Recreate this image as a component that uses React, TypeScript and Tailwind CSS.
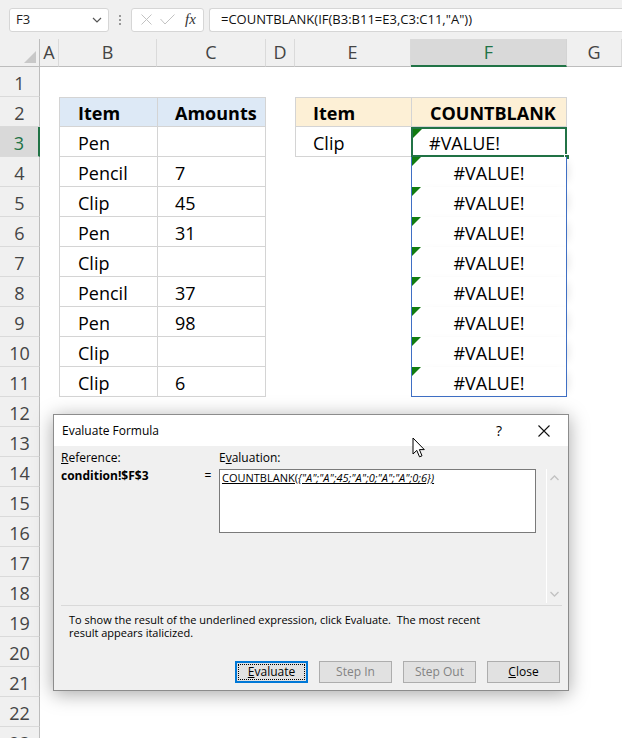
import React from "react";

const font = { fontFamily: '"Open Sans", "Noto Sans", sans-serif' };

const cols = ["A", "B", "C", "D", "E", "F", "G"];

const items: Record<number, [string, string]> = {
  3: ["Pen", ""],
  4: ["Pencil", "7"],
  5: ["Clip", "45"],
  6: ["Pen", "31"],
  7: ["Clip", ""],
  8: ["Pencil", "37"],
  9: ["Pen", "98"],
  10: ["Clip", ""],
  11: ["Clip", "6"],
};

function ErrorMark() {
  return (
    <svg width="9" height="9" viewBox="0 0 9 9" className="absolute left-0 top-0">
      <polygon points="0,0 9,0 0,9" fill="#107c10" />
    </svg>
  );
}

function cellClass(r: number, c: string) {
  const base = "relative flex items-center overflow-visible whitespace-nowrap pt-[3px] text-[18px] text-black";
  if (c === "B" && r >= 2 && r <= 11) {
    return `${base} pl-[18px] border-l border-b border-[#d4d4d4] ${r === 2 ? "border-t bg-[#dde9f6] font-bold" : "bg-white"}`;
  }
  if (c === "C" && r >= 2 && r <= 11) {
    return `${base} pl-[17px] border-l border-r border-b border-[#d4d4d4] ${r === 2 ? "border-t bg-[#dde9f6] font-bold" : "bg-white"}`;
  }
  if (c === "E" && (r === 2 || r === 3)) {
    return `${base} pl-[17px] border-l border-b border-[#d4d4d4] ${r === 2 ? "border-t bg-[#fdf0d6] font-bold" : "bg-white"}`;
  }
  if (c === "F" && r === 2) {
    return `${base} pl-[18px] border border-[#d4d4d4] bg-[#fdf0d6] font-bold`;
  }
  if (c === "F" && r === 3) {
    return `${base} pl-[16px] border-2 border-[#217346] bg-white`;
  }
  if (c === "F" && r >= 4 && r <= 11) {
    return `${base} justify-center border-l border-r border-[#3f6fc4] bg-white shadow-[6px_0_10px_-6px_rgba(0,0,0,0.15)] ${r === 11 ? "border-b" : ""}`;
  }
  return "bg-white";
}

function cellContent(r: number, c: string) {
  if (c === "B" && r === 2) return "Item";
  if (c === "C" && r === 2) return "Amounts";
  if (c === "B" && items[r]) return items[r][0];
  if (c === "C" && items[r]) return items[r][1];
  if (c === "E" && r === 2) return "Item";
  if (c === "F" && r === 2) return "COUNTBLANK";
  if (c === "E" && r === 3) return "Clip";
  if (c === "F" && r === 3)
    return (
      <>
        <ErrorMark />
        <span>#VALUE!</span>
        <span className="absolute bottom-[-5px] right-[-5px] h-[6px] w-[6px] border border-white bg-[#217346]" />
      </>
    );
  if (c === "F" && r >= 4 && r <= 11)
    return (
      <>
        <ErrorMark />
        <span>#VALUE!</span>
      </>
    );
  return null;
}

function FormulaBar() {
  return (
    <div className="flex h-[39px] items-center gap-0 bg-[#f0f0f0] pl-[9px]">
      <div className="flex h-[24px] w-[100px] items-center justify-between rounded-[3px] border border-[#d6d6d6] bg-white pl-[6px] pr-[6px] text-[13px] text-[#222]">
        <span>F3</span>
        <svg width="10" height="6" viewBox="0 0 10 6">
          <path d="M1 1 L5 5 L9 1" fill="none" stroke="#555" strokeWidth="1.2" />
        </svg>
      </div>
      <div className="flex w-[22px] flex-col items-center gap-[2px]">
        <span className="h-[2px] w-[2px] bg-[#999]" />
        <span className="h-[2px] w-[2px] bg-[#999]" />
        <span className="h-[2px] w-[2px] bg-[#999]" />
      </div>
      <div className="flex h-[24px] w-[73px] items-center gap-[8px] rounded-[3px] border border-[#d6d6d6] bg-white pl-[9px]">
        <svg width="11" height="11" viewBox="0 0 11 11">
          <path d="M0.5 0.5 L10.5 10.5 M10.5 0.5 L0.5 10.5" stroke="#c2c2c2" strokeWidth="1" />
        </svg>
        <svg width="15" height="11" viewBox="0 0 15 11">
          <path d="M0.5 5 L5 10 L14.5 0.5" fill="none" stroke="#c2c2c2" strokeWidth="1" />
        </svg>
        <span className="ml-[2px] text-[15px] italic text-[#333]" style={{ fontFamily: '"Liberation Serif", serif' }}>
          fx
        </span>
      </div>
      <div className="ml-[5px] flex h-[24px] flex-1 items-center rounded-l-[3px] border border-r-0 border-[#d6d6d6] bg-white pl-[11px] text-[13px] text-[#111]">
        =COUNTBLANK(IF(B3:B11=E3,C3:C11,"A"))
      </div>
    </div>
  );
}

function Sheet() {
  const rows = Array.from({ length: 23 }, (_, i) => i + 1);
  return (
    <div className="grid grid-cols-[40px_19px_98px_109px_29px_116px_156px_55px] grid-rows-[28px] auto-rows-[30px]">
      <div className="relative border-b border-r border-[#bdbdbd] bg-[#f0f0f0]">
        <svg width="12" height="12" viewBox="0 0 12 12" className="absolute bottom-[3px] right-[3px]">
          <polygon points="12,0 12,12 0,12" fill="#c8c8c8" />
        </svg>
      </div>
      {cols.map((c) =>
        c === "F" ? (
          <div
            key={c}
            className="flex items-center justify-center border-b-2 border-r border-b-[#217346] border-r-[#d4d4d4] bg-[#d9d9d9] text-[18px] text-[#217346]"
          >
            {c}
          </div>
        ) : (
          <div
            key={c}
            className="flex items-center justify-center border-b border-r border-b-[#bdbdbd] border-r-[#dadada] bg-[#f0f0f0] text-[18px] text-[#444]"
          >
            {c}
          </div>
        )
      )}
      {rows.map((r) => (
        <React.Fragment key={r}>
          {r === 3 ? (
            <div className="flex items-center justify-center border-b border-r-2 border-b-[#dadada] border-r-[#217346] bg-[#d9d9d9] pt-[3px] text-[18px] text-[#217346]">
              {r}
            </div>
          ) : (
            <div className="flex items-center justify-center border-b border-r border-b-[#dadada] border-r-[#bdbdbd] bg-[#f0f0f0] pt-[3px] text-[18px] text-[#444]">
              {r}
            </div>
          )}
          {cols.map((c) => (
            <div key={c} className={cellClass(r, c)}>
              {cellContent(r, c)}
            </div>
          ))}
        </React.Fragment>
      ))}
    </div>
  );
}

function Button({ label, u, rest, disabled, focused }: { label?: string; u: string; rest: string; disabled?: boolean; focused?: boolean }) {
  if (focused) {
    return (
      <div className="flex h-[22px] w-[73px] items-center justify-center border-2 border-[#0078d7] bg-[#e1e1e1] p-px">
        <div className="flex h-full w-full items-center justify-center border border-dotted border-black text-[12px] text-black">
          <span className="underline">{u}</span>
          {rest}
        </div>
      </div>
    );
  }
  return (
    <div
      className={`flex h-[22px] w-[73px] items-center justify-center border border-[#adadad] bg-[#e1e1e1] text-[12px] ${
        disabled ? "text-[#838383]" : "text-black"
      }`}
    >
      {label ? label : (
        <>
          <span className="underline">{u}</span>
          {rest}
        </>
      )}
    </div>
  );
}

function Dialog() {
  return (
    <div
      className="absolute left-[53px] top-[414px] flex h-[277px] w-[516px] flex-col border border-[#8c8c8c] bg-[#f0f0f0] shadow-[0_3px_18px_rgba(0,0,0,0.35)]"
      style={{ fontFamily: '"Open Sans", "Noto Sans", sans-serif' }}
    >
      <div className="flex h-[31px] items-center bg-white pl-[8px] text-[12px] text-black">
        <span className="flex-1">Evaluate Formula</span>
        <span className="mr-[36px] text-[14px]">?</span>
        <svg width="12" height="12" viewBox="0 0 12 12" className="mr-[18px]">
          <path d="M0.5 0.5 L11.5 11.5 M11.5 0.5 L0.5 11.5" stroke="#111" strokeWidth="1.1" />
        </svg>
      </div>
      <div className="flex flex-1 flex-col pl-[7px] pr-[6px]">
        <div className="flex pt-[4px] text-[12px] text-black">
          <div className="w-[141px]">
            <div className="leading-[16px]">
              <span className="underline">R</span>eference:
            </div>
            <div className="mt-[2px] font-bold leading-[16px]">condition!$F$3</div>
          </div>
          <div className="mt-[18px] w-[12px] text-center leading-[16px]">=</div>
          <div className="ml-[5px] flex flex-col">
            <div className="leading-[16px]">
              E<span className="underline">v</span>aluation:
            </div>
            <div className="mt-[3px] flex items-start">
              <div className="h-[64px] w-[317px] border border-[#7a7a7a] bg-white pl-[2px] pt-px text-[11px] leading-[14px] text-black underline">
                COUNTBLANK(<i>{'{"A";"A";45;"A";0;"A";"A";0;6})'}</i>
              </div>
              <div className="ml-[10px] flex h-[134px] w-[16px] flex-col items-center justify-between border-l border-white py-[6px]">
                <svg width="9" height="6" viewBox="0 0 9 6">
                  <path d="M0.5 5 L4.5 1 L8.5 5" fill="none" stroke="#c2c2c2" strokeWidth="1.3" />
                </svg>
                <svg width="9" height="6" viewBox="0 0 9 6">
                  <path d="M0.5 1 L4.5 5 L8.5 1" fill="none" stroke="#c2c2c2" strokeWidth="1.3" />
                </svg>
              </div>
            </div>
          </div>
        </div>
        <div className="mt-[2px] border-t border-[#d9d9d9]" />
        <div className="mt-[7px] pl-[8px] text-[11px] leading-[13px] text-black">
          <div>To show the result of the underlined expression, click Evaluate.&nbsp; The most recent</div>
          <div>result appears italicized.</div>
        </div>
        <div className="mt-[22px] flex justify-end gap-[11px] pr-[2px]">
          <Button u="E" rest="valuate" focused />
          <Button label="Step In" u="" rest="" disabled />
          <Button label="Step Out" u="" rest="" disabled />
          <Button u="C" rest="lose" />
        </div>
      </div>
    </div>
  );
}

function Cursor() {
  return (
    <svg width="14" height="22" viewBox="0 0 14 22" className="absolute left-[412px] top-[437px]">
      <path d="M1 1 L1 17 L4.8 13.4 L7.5 19.8 L10 18.8 L7.4 12.6 L12.3 12.6 Z" fill="white" stroke="black" strokeWidth="1" strokeLinejoin="round" />
    </svg>
  );
}

export default function App() {
  return (
    <div className="relative h-[738px] w-[622px] overflow-hidden bg-white" style={font}>
      <FormulaBar />
      <Sheet />
      <Dialog />
      <Cursor />
    </div>
  );
}
